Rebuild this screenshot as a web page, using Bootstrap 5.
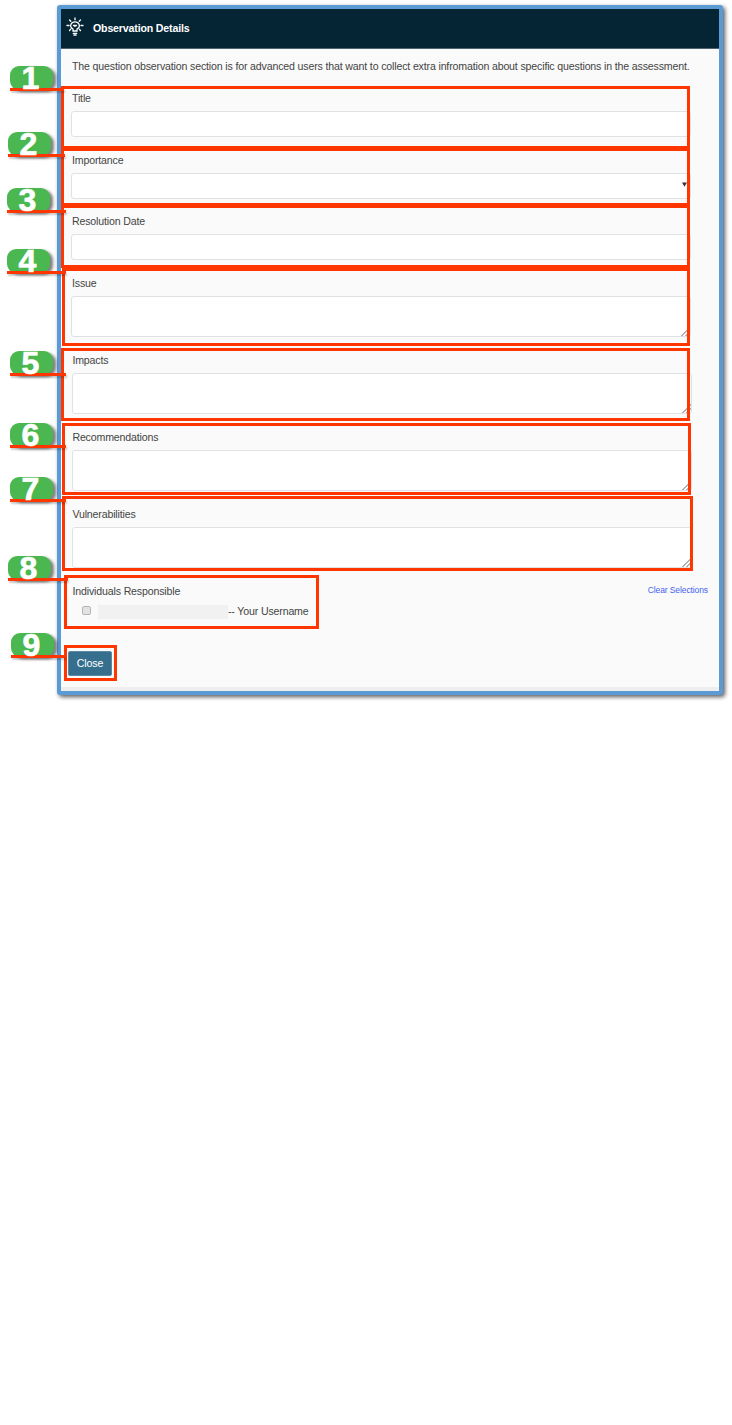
<!DOCTYPE html>
<html lang="en">
<head>
<meta charset="utf-8">
<title>Observation Details</title>
<link href="https://cdn.jsdelivr.net/npm/bootstrap@5.3.0/dist/css/bootstrap.min.css" rel="stylesheet">
<style>
body{font-family:"Liberation Sans",Arial,sans-serif;font-size:10.6px;letter-spacing:-.156px;line-height:20px;color:#444;background:#fff;overflow-x:hidden}
.page-wrap{width:732px;height:1425px;padding:5px 0 0 57px}
.panel{width:666px;height:690px;border:4px solid #5b9bd5;border-radius:3px;background:#fafafa;box-shadow:2px 2px 4px rgba(0,0,0,.65)}
.panel-head{height:40px;background:#052535;border-bottom:1px solid #4d626d;color:#fff;padding-left:5px}
.panel-head svg{margin-top:-4px}
.panel-head h1{font-size:10.6px;line-height:20px;font-weight:700;letter-spacing:-.16px;margin:-1px 0 0 9px}
.panel-body{padding:7px 28px 0 10px}
.intro{margin:0 0 12px 1px;white-space:nowrap}
.fld{height:61.5px}
.fld.tall{height:77.1px}
.fld label{display:block;height:23px;margin-left:1px}
.fld.shift label{margin-left:.4px}
.fld .form-control,.fld .form-select{display:block;width:620px;height:26px;min-height:0;padding:2px 4px;font-size:10.5px;border:1px solid #dfe1e5;border-radius:3px;background-color:#fff}
.fld .form-select{background-image:none}
.fld.tall .form-control{height:41px}
.fld.shift{margin-left:1px}
.fld .form-control::-webkit-resizer{background:linear-gradient(135deg,transparent 68%,#b0b0b0 68% 74%,transparent 74% 83%,#b0b0b0 83% 89%,transparent 89%)}
.arrow{position:absolute;right:4px;top:9px;width:5px;height:5px}
.who{line-height:20px}
.who-label{margin-left:1.5px}
.clear-link{color:#4463f0;font-size:8.5px;letter-spacing:-.1px;text-decoration:none;margin:-1px -17px 0 0}
.box{width:9px;height:9px;border:1px solid #b5b5b5;border-radius:2px;background:#e2e2e2;margin-left:11px}
.redact{width:130px;height:14px;background:#f1f1f1;margin:2px 0 0 7px}
.btn-close-panel{display:block;width:44px;height:25px;margin:30px 0 0 -3px;padding:0;background:#366f8e;border:1px solid #5a8aa4;color:#fff;font-size:10.6px;letter-spacing:-.1px;line-height:23px;border-radius:2px}
.panel-foot{height:4px;background:#eee}
.frame{position:absolute;border:3px solid #ff3600}
.pin{position:absolute;isolation:isolate;width:43px;height:24px;border-radius:9px;background:#4bb750;box-shadow:3px 2px 3px rgba(0,0,0,.5);color:#fff;font-weight:700;font-size:32px;letter-spacing:0;line-height:25px;text-align:center;padding-right:2px;-webkit-text-stroke:.7px #fff}
.pin::after{content:"";position:absolute;left:0;top:22px;height:3px;width:var(--w);background:#ff3600;box-shadow:1px 2px 2px rgba(0,0,0,.2);z-index:-1}
.f1{left:61px;top:86px;width:629px;height:63px}.f2{left:61px;top:148px;width:629px;height:58px}.f3{left:61px;top:205px;width:629px;height:63px}
.f4{left:62px;top:268px;width:628px;height:78px}.f5{left:61px;top:348px;width:629px;height:73px}.f6{left:62px;top:423px;width:629px;height:72px}
.f7{left:62px;top:496px;width:631px;height:75px}.f8{left:64px;top:575px;width:255px;height:54px}.f9{left:64px;top:645px;width:53px;height:36px}
.p1{left:10px;top:66px;--w:54px}.p2{left:8px;top:132px;--w:57px}.p3{left:7px;top:188px;--w:59px}.p4{left:7px;top:249px;--w:59px}
.p5{left:10px;top:351px;--w:56px}.p6{left:10px;top:423px;--w:56px}.p7{left:10px;top:477px;--w:56px}.p8{left:8px;top:556px;--w:60px}.p9{left:11px;top:633px;--w:54px}
</style>
</head>
<body>
<div class="page-wrap position-relative">
  <main class="panel d-flex flex-column">
    <header class="panel-head d-flex align-items-center flex-shrink-0">
      <svg width="18" height="20" viewBox="0 0 18 20" fill="none" stroke="#fff" stroke-width="1.3" stroke-linecap="round"><path d="M7 14v-2C4.800 10.700 4.300 8.700 5 7.200c1.400-3.100 6.600-3.100 8 0 .7 1.500.2 3.500-2 4.800v2zM7.300 16.500h3.400M8 18.200h2M9 1v1.800M3.500 3l1.300 1.300M14.500 3l-1.300 1.300M1 8.500h2M15 8.500h2M3.500 13.500l1.200-1.200M14.500 13.500l-1.200-1.200M7.500 8.500h3M9 8.500v1"/></svg>
      <h1>Observation Details</h1>
    </header>
    <div class="panel-body flex-grow-1">
      <p class="intro">The question observation section is for advanced users that want to collect extra infromation about specific questions in the assessment.</p>
      <div class="fld"><label for="t">Title</label><input id="t" class="form-control"></div>
      <div class="fld"><label for="i">Importance</label><div class="position-relative"><select id="i" class="form-select"></select><svg class="arrow" viewBox="0 0 5 5"><path d="M0 .5h5L2.500 4.800z" fill="#333"/></svg></div></div>
      <div class="fld"><label for="r">Resolution Date</label><input id="r" class="form-control"></div>
      <div class="fld tall"><label for="s">Issue</label><textarea id="s" class="form-control"></textarea></div>
      <div class="fld tall shift"><label for="m">Impacts</label><textarea id="m" class="form-control"></textarea></div>
      <div class="fld tall shift"><label for="c">Recommendations</label><textarea id="c" class="form-control"></textarea></div>
      <div class="fld tall shift"><label for="v">Vulnerabilities</label><textarea id="v" class="form-control"></textarea></div>
      <div class="who d-flex justify-content-between"><span class="who-label">Individuals Responsible</span><a href="#" class="clear-link">Clear Selections</a></div>
      <div class="who d-flex align-items-center"><span class="box"></span><span class="redact"></span><span>-- Your Username</span></div>
      <button type="button" class="btn btn-close-panel">Close</button>
    </div>
    <footer class="panel-foot flex-shrink-0"></footer>
  </main>
  <div class="frame f1"></div><div class="frame f2"></div><div class="frame f3"></div><div class="frame f4"></div><div class="frame f5"></div><div class="frame f6"></div><div class="frame f7"></div><div class="frame f8"></div><div class="frame f9"></div>
  <div class="pin p1">1</div><div class="pin p2">2</div><div class="pin p3">3</div><div class="pin p4">4</div><div class="pin p5">5</div><div class="pin p6">6</div><div class="pin p7">7</div><div class="pin p8">8</div><div class="pin p9">9</div>
</div>
<script src="https://cdn.jsdelivr.net/npm/bootstrap@5.3.0/dist/js/bootstrap.bundle.min.js"></script>
</body>
</html>
